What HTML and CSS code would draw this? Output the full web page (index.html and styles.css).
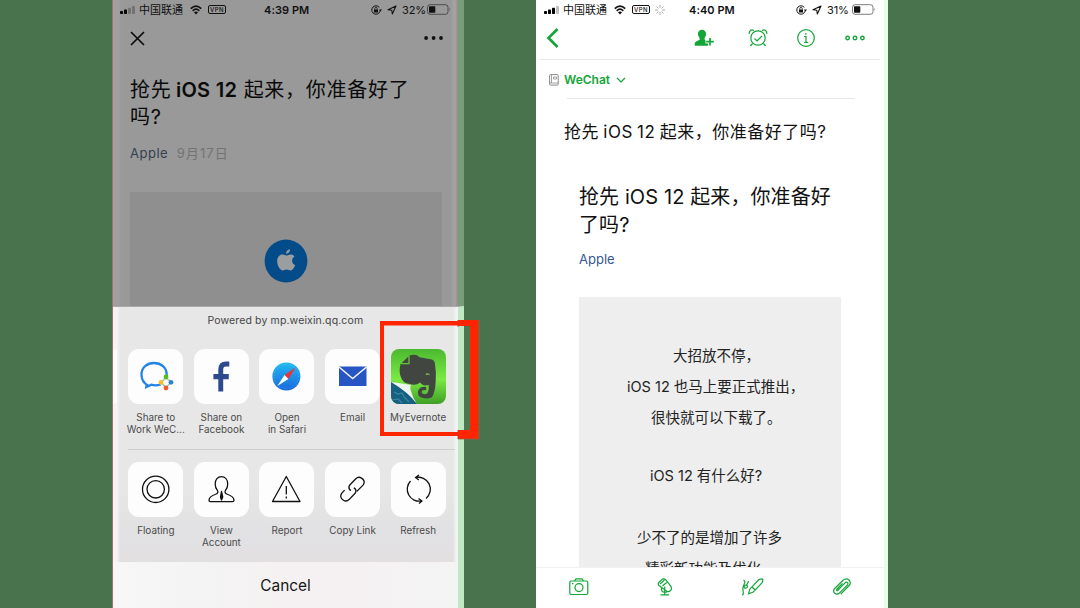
FILE: index.html
```html
<!DOCTYPE html>
<html lang="zh-CN">
<head>
<meta charset="utf-8">
<title>iOS 12</title>
<link rel="stylesheet" href="styles.css">
</head>
<body>
<svg class="defs" width="0" height="0">
  <symbol id="wifi" viewBox="0 0 12 10"><path d="M.8 3.7Q6-1.3 11.2 3.7M2.7 5.8Q6 2.6 9.3 5.8" fill="none" stroke="currentColor" stroke-width="1.7"/><path d="M6 9.5 3.9 7.3Q6 5.7 8.1 7.3Z" fill="currentColor"/></symbol>
  <symbol id="lock" viewBox="0 0 11 10"><circle cx="5" cy="5" r="4.2" fill="none" stroke="currentColor" stroke-width="1" stroke-dasharray="23 3"/><rect x="3" y="4.5" width="4" height="3" fill="currentColor"/><path d="M3.8 4.8V3.6a1.2 1.2 0 0 1 2.4 0v1" fill="none" stroke="currentColor" stroke-width=".8"/><path d="M8 4.4h3L9.5 6.4Z" fill="currentColor"/></symbol>
  <symbol id="nav" viewBox="0 0 10 10"><path d="M9 1 1 4.8l3.8.5.5 3.7Z" fill="none" stroke="currentColor" stroke-width="1.1" stroke-linejoin="round"/></symbol>
  <symbol id="battery" viewBox="0 0 24 11"><rect x=".5" y=".7" width="20.5" height="9.6" rx="2.6" fill="none" stroke="currentColor" stroke-opacity=".55"/><rect x="2" y="2.2" width="6.3" height="6.6" rx=".8" fill="currentColor"/><path d="M22.2 3.8q1.3 1.6 0 3.3Z" fill="currentColor" opacity=".6"/></symbol>
</svg>

<main class="stage">
  <section class="phone share">
    <header class="status">
      <svg class="signal" viewBox="0 0 15 8"><rect y="5" width="3" height="3" rx=".7"/><rect x="4" y="3.6" width="3" height="4.4" rx=".7"/><rect x="8" y="1.8" width="3" height="6.2" rx=".7" opacity=".25"/><rect x="12" width="3" height="8" rx=".7" opacity=".25"/></svg>
      <span class="carrier">中国联通</span>
      <svg class="wifi"><use href="#wifi"/></svg>
      <span class="vpn">VPN</span>
      <span class="clock">4:39 PM</span>
      <svg class="lock"><use href="#lock"/></svg>
      <svg class="nav"><use href="#nav"/></svg>
      <span class="percent">32%</span>
      <svg class="battery"><use href="#battery"/></svg>
    </header>
    <div class="toolbar">
      <svg width="15" height="15" viewBox="0 0 15 15"><path d="m1 1 13 13M14 1 1 14" stroke="#080808" stroke-width="1.6"/></svg>
      <svg width="20" height="4" viewBox="0 0 20 4"><g fill="#111"><circle cx="2.1" cy="2" r="1.9"/><circle cx="9.6" cy="2" r="1.9"/><circle cx="17" cy="2" r="1.9"/></g></svg>
    </div>
    <article class="article">
      <h1>抢先 <b>iOS 12</b> 起来，你准备好了<br>吗?</h1>
      <p class="byline"><span>Apple</span><time>9月17日</time></p>
      <div class="hero">
        <svg width="44" height="44" viewBox="0 0 44 44"><circle cx="22" cy="22" r="21.4" fill="#034b89"/><g fill="#9b9d9f"><path d="M22.2 16.6c1.4 0 2.5-1.1 4.500-1.100 1.700 0 3 .8 3.800 1.900-3.600 2-3 7.200.7 8.600-.9 2.600-2.700 5.400-4.700 5.400-1.500 0-2.100-.8-3.900-.8s-2.400.8-3.900.8c-2.500 0-5.500-4.900-5.500-9.200 0-4.200 2.500-6.600 5.300-6.600 1.700 0 2.900 1 3.700 1Z"/><path d="M22 14.700c0-2.300 1.700-4.200 4-4.500.2 2.500-1.900 4.400-4 4.500Z"/></g></svg>
      </div>
    </article>

    <div class="sheet">
      <p class="powered">Powered by mp.weixin.qq.com</p>
      <div class="apps">
        <div class="item"><div class="tile"><svg viewBox="0 0 55 55"><path d="M20 36.500Q13.500 33 13.500 25.500C13.500 18.500 19 14 26 14s12.700 4.500 12.700 11.600c0 1-.2 2-.5 2.700M18.800 35 18.300 38l5-2.300c3 1 6 .9 9.500-.2" fill="none" stroke="#2384e8" stroke-width="2.300"/><path d="m38 28.500 5 4.700-5 5.300-5-5.100Z" fill="none" stroke="#9fc6b0" stroke-width="1.500"/><circle cx="38" cy="28" r="2.400" fill="#54bd20"/><circle cx="43" cy="33.300" r="2.400" fill="#2b83d4"/><circle cx="38" cy="39" r="2.400" fill="#ef5932"/><circle cx="33" cy="33.500" r="2.400" fill="#f7bd2e"/></svg></div><p>Share to<br>Work WeC...</p></div>
        <div class="item"><div class="tile"><svg viewBox="0 0 55 55"><path d="M24.300 42.500V30.300h-4.900v-5.200h4.900V20.500q0-8 7.700-8h3.300v5H32q-2.800 0-2.800 3v4.600h5.600v5.200h-5.600v12.200Z" fill="#2e4a8d"/></svg></div><p>Share on<br>Facebook</p></div>
        <div class="item"><div class="tile"><svg viewBox="0 0 55 55"><defs><linearGradient id="sky" x2="0" y2="1"><stop stop-color="#20b9f4"/><stop offset="1" stop-color="#1968dc"/></linearGradient></defs><circle cx="27.400" cy="27.500" r="14" fill="url(#sky)"/><circle cx="27.400" cy="27.500" r="12.200" fill="none" stroke="#94ddfb" stroke-opacity=".45" stroke-width="1.200" stroke-dasharray=".6 2"/><path d="m36.500 18.500-11 7.500 3.900 4Z" fill="#ee3234"/><path d="m18.300 37 7.200-11 3.900 4Z" fill="#fff"/></svg></div><p>Open<br>in Safari</p></div>
        <div class="item"><div class="tile"><svg viewBox="0 0 55 55"><path d="M14 17.500h27.500V37H14Z" fill="#2855c4"/><path d="m14 18 13.700 11.500L41.500 18" fill="none" stroke="#f3f6ff" stroke-width="1.500"/></svg></div><p>Email</p></div>
        <div class="item"><div class="tile evernote"><svg viewBox="0 0 55 55"><defs><linearGradient id="leaf" x2="0" y2="1"><stop stop-color="#4bb92f"/><stop offset=".55" stop-color="#7bea44"/><stop offset="1" stop-color="#3f9f27"/></linearGradient></defs><rect width="55" height="55" fill="url(#leaf)"/><path d="M9.500 15 18.500 6.500q7-2 10 1.800l12.500 2.200q2.300.7 2.800 3.200 1.700 9 .9 18.300-.5 12-4 16.500-8 2.500-13-1.500-2.500-5.500 2-8.500 3-1.300 5.500-.5v3.300q-4.500-1-4.500 2 .5 2.500 4.500 1.800 3-1 2.500-9-6 1.500-8.500-2.500-4.500 3.500-10.500 1.500-7.500-1-9-7.500-2-5-.2-12.600Z" fill="#424640"/><path d="M10 14.700h8V7" fill="none" stroke="#65c63b" stroke-width="1.300"/><path d="M34.500 26q1-3.500 5 0-2.500-1-5 0Z" fill="#82e257"/><path d="M0 33q9 2 13 5.500 7 5.500 13 16.500H0Z" fill="#17607f"/><path d="M0 33q8 1 20 3-1.500 2-.3 5.500Q22 49 26 55 17 43 0 33Z" fill="#eff4f1"/><path d="m3 43 4 2 4-1 2 4 5 5M1 51l6-1 4 4" stroke="#3688a6" stroke-width="1.200" fill="none"/></svg></div><p>MyEvernote</p></div>
      </div>
      <div class="apps actions">
        <div class="item"><div class="tile"><svg class="line" viewBox="0 0 55 55"><circle cx="27.700" cy="27.300" r="13.200"/><circle cx="27.700" cy="27.300" r="8.700"/></svg></div><p>Floating</p></div>
        <div class="item"><div class="tile"><svg class="line" viewBox="0 0 55 55"><path d="M23.500 28.500c-1.500-1.500-2.300-3.400-2.300-6.500 0-4.500 2.500-7.300 6.200-7.300s6.300 2.800 6.300 7.300c0 3.100-.8 5-2.300 6.500-.8 1.200-.3 3 1.300 3.500 4 1.300 7.300 2.800 7.300 6.300 0 1-.5 1.400-1.400 1.400H16.300c-.9 0-1.300-.4-1.300-1.400 0-3.500 3.300-5 7.200-6.300 1.600-.5 2.100-2.300 1.300-3.500Z"/><path d="m27.500 29.500-1 5.500 1 3 1.200-3Z" fill="#111"/></svg></div><p>View<br>Account</p></div>
        <div class="item"><div class="tile"><svg class="line" viewBox="0 0 55 55"><path d="M27.300 14.500 41 39.500H13.500ZM27.300 24v8.500M27.300 34.500v2"/></svg></div><p>Report</p></div>
        <div class="item"><div class="tile"><svg class="line" viewBox="0 0 55 55"><path d="M26 28.500q-2.500-1.200-2-4 .3-1 1.500-2.200l5.300-5.600q2.700-2.500 5.700-.6 4.300 2.700 1.800 6.800l-6.500 6.500"/><path d="M28.800 25.800q2.600 1.200 2.100 4-.3 1-1.500 2.200l-5.300 5.600q-2.700 2.500-5.700.6-4.300-2.700-1.800-6.800l3-3.300"/></svg></div><p>Copy Link</p></div>
        <div class="item"><div class="tile"><svg class="line" viewBox="0 0 55 55"><path d="M19.500 19A12 12 0 0 0 30.500 39M24.500 15.600A12 12 0 0 1 35 36.500M28 13l-3.500 2.600 3.300 2.500M27.500 36.500l3.500 2.600-3 2.500"/></svg></div><p>Refresh</p></div>
      </div>
      <button class="cancel">Cancel</button>
    </div>
    <svg class="highlight" width="102" height="122" viewBox="0 0 102 122"><path d="M78 2V9M78 112v9" stroke="#617565"/><path d="M84 8h6v104h-6Z" fill="#4d7851"/><path d="M0 3h78V2h20.500v119H78v-3H0Zm4 4.500V114h74v-2h12V8H78v-.5Z" fill="#ff2500" fill-rule="evenodd"/><path d="M99 2v119H78" fill="none" stroke="#9b5d45" stroke-width=".8"/></svg>
  </section>

  <section class="phone note">
    <header class="status">
      <svg class="signal" viewBox="0 0 15 8"><rect y="5" width="3" height="3" rx=".7"/><rect x="4" y="3.600" width="3" height="4.400" rx=".7"/><rect x="8" y="1.800" width="3" height="6.200" rx=".7"/><rect x="12" width="3" height="8" rx=".7" opacity=".25"/></svg>
      <span class="carrier">中国联通</span>
      <svg class="wifi"><use href="#wifi"/></svg>
      <span class="vpn">VPN</span>
      <svg class="spinner" viewBox="0 0 10 10"><path d="M5 0v3M5 7v3M0 5h3M7 5h3M1.500 1.500l2 2M6.500 6.500l2 2M8.500 1.500l-2 2M3.500 6.500l-2 2" stroke="#999" stroke-width=".8"/></svg>
      <span class="clock">4:40 PM</span>
      <svg class="lock"><use href="#lock"/></svg>
      <svg class="nav"><use href="#nav"/></svg>
      <span class="percent">31%</span>
      <svg class="battery"><use href="#battery"/></svg>
    </header>
    <nav class="note-bar">
      <svg class="back" width="13" height="20" viewBox="0 0 13 20"><path d="M11.500 1 2.500 10l9 9" stroke-width="2.600"/></svg>
      <svg class="person" width="20" height="18" viewBox="0 0 20 18"><path d="M8 .8c2.400 0 4.100 1.600 4.100 4.200 0 2.400-1.600 3.200-1.600 5 0 1.400 3.600 1.500 3.600 3.200v3.500H.8c-.3-3.500.7-4.200 3-5 1.500-.6 1.900-.9 1.900-1.700C5.700 8.200 3.900 7.400 3.900 5 3.900 2.400 5.600.8 8 .8Z" fill="#13a538" stroke="none"/><path d="M16 8v9M11.500 12.500h8" stroke="#fff" stroke-width="4"/><path d="M16 9v7.500M12.200 12.700h7.600" stroke-width="1.700"/></svg>
      <svg class="alarm" width="20" height="18" viewBox="0 0 20 18"><circle cx="10" cy="9" r="7.200"/><path d="M6.500 9.500 9 12l5-5M1.300 4.800q-.5-3 2.700-4l2 .8M18.700 4.800q.5-3-2.700-4l-2 .8M4.600 14.500 2.400 17M15.400 14.500l2.200 2.500"/></svg>
      <svg class="info" width="18" height="18" viewBox="0 0 18 18"><circle cx="9" cy="9" r="8.300"/><path d="M7 7.500h2v6M7 13.500h4.200M8.800 4v1.700"/></svg>
      <svg class="more" width="20" height="6" viewBox="0 0 20 6"><g stroke-width="1.400"><circle cx="2.600" cy="3" r="1.750"/><circle cx="10" cy="3" r="1.750"/><circle cx="17.400" cy="3" r="1.750"/></g></svg>
    </nav>
    <div class="notebook">
      <svg width="10" height="12" viewBox="0 0 10 12"><rect x=".6" y=".6" width="8.600" height="10.500" rx="1" stroke="#8b8b8b"/><path d="M2.500.6V9M.6 9h8.600M4.500 3h3v2h-3Z" stroke="#8b8b8b" stroke-width=".8"/></svg>
      <b>WeChat</b>
      <svg class="caret" width="10" height="6" viewBox="0 0 10 6"><path d="m1 1 4 4 4-4"/></svg>
    </div>
    <h2 class="note-title">抢先 iOS 12 起来，你准备好了吗?</h2>
    <div class="clip">
      <h3>抢先 iOS 12 起来，你准备好<br>了吗?</h3>
      <a>Apple</a>
      <div class="body-text">
        <p class="l1">大招放不停，</p>
        <p class="l2">iOS 12 也马上要正式推出，</p>
        <p class="l3">很快就可以下载了。</p>
        <p class="l4">iOS 12 有什么好?</p>
        <p class="l5">少不了的是增加了许多</p>
        <p class="l6">精彩新功能及优化。</p>
      </div>
    </div>
    <footer class="tools">
      <svg width="20" height="18" viewBox="0 0 20 18"><rect x=".8" y="3" width="18" height="13.500" rx="1.500"/><path d="M5.500 3 7 .8h6L14.500 3M3 5.700h1.500"/><circle cx="10" cy="9.600" r="4"/></svg>
      <svg width="16" height="18" viewBox="0 0 16 18"><path d="m1.500 4.700 4-3.600q1.700-.8 3.300.8l5 6.300q1.500 2.700-.4 4.600-2.200 1.700-4.400-.2L1.700 7.300q-.8-1.300-.2-2.600ZM3 6l4.500-4M5.300 8l4.500-3.500M4.500 9v2.500q.3 2.700 3.200 2.800 1.700 0 2.600-1M7.700 8.500v8M3.500 16.800h8.600"/></svg>
      <svg width="23" height="18" viewBox="0 0 23 18"><path d="m7.500 15.800 1.300-4.600L17.500 2q1.200-1.200 2.700-.8h1.500v1.900q0 1-1 2L12.300 14ZM11 9l3.200 3M2.500 2q2.500 1.500.5 4.500-2 3.500-.8 7 .6 3-1 3.500M3 9q.5-2.500 3-1.700 1.200 1.700-.8 2.700Q3.500 10.500 3 9M5.700 7l2-4"/></svg>
      <svg width="20" height="18" viewBox="0 0 20 18"><path d="m5 13 8.300-8.400q1.300-1 2.200 0t0 2.300l-8.300 8.400q-2.200 1.800-4.400 0-2.200-2.200-.3-4.600L11 2.300q3-2.600 5.700-.5 2.900 2.800.5 5.700l-8.500 8.700M5 13q-.8-1 0-2l5.500-5.700"/></svg>
    </footer>
  </section>
</main>
</body>
</html>
```
FILE: styles.css
```css
* { box-sizing: border-box; }
body, h1, h2, h3, p { margin: 0; font-weight: 400; }
body {
  width: 1080px;
  height: 608px;
  overflow: hidden;
  background: #49734c;
  font-family: Inter, "Noto Sans CJK SC", sans-serif;
  color: #111;
  white-space: nowrap;
}
.defs { position: absolute; }
svg { display: block; flex: none; }
.stage { display: flex; height: 608px; padding-left: 112px; gap: 72px; }
.phone { display: flex; flex-direction: column; height: 608px; }

.status {
  display: flex;
  align-items: center;
  flex: none;
  height: 19px;
  font-size: 11px;
}
.signal { width: 15px; height: 8px; }
.carrier { width: 44px; margin-left: 4px; font-size: 11px; line-height: 18px; }
.wifi { width: 12px; height: 10px; margin-left: 7px; }
.vpn {
  width: 18px;
  height: 9px;
  margin-left: 6px;
  border: 1px solid currentColor;
  border-radius: 2px;
  font-size: 6px;
  font-weight: 500;
  line-height: 7px;
  letter-spacing: .4px;
  text-align: center;
}
.spinner { width: 10px; height: 10px; margin-left: 5px; }
.clock { width: 46px; margin-left: 38px; font-weight: 600; letter-spacing: .05px; }
.lock { width: 11px; height: 10px; margin-left: 61px; }
.nav { width: 10px; height: 10px; margin-left: 5px; }
.percent { width: 24px; margin-left: 5px; letter-spacing: -.15px; }
.battery { width: 24px; height: 11px; margin-left: 1px; }

.share {
  position: relative;
  width: 352px;
  border-left: 1px solid #b06d6b;
  border-right: 6px solid #789e79;
  background: linear-gradient(90deg, #a0a0a0 0 6px, #999 8px 338px, #a2a2a2 340px 343px, #998f8b 344px);
}
.share .status { padding-left: 7px; }
.toolbar {
  display: flex;
  align-items: center;
  justify-content: space-between;
  height: 38px;
  padding: 1px 14px 0 17px;
}
.article { height: 250px; padding: 20.5px 16px 0 17px; }
.article h1 { font-size: 20px; line-height: 27.5px; letter-spacing: .75px; color: #0a0a0a; }
.article b { margin: 0 0 0 -2px; font-weight: 600; letter-spacing: .3px; }
.byline { display: flex; gap: 8.5px; margin-top: 11.5px; font-size: 13px; line-height: 20px; letter-spacing: .5px; }
.byline span { color: #343f52; }
.byline time { color: #737373; letter-spacing: 1.1px; }
.hero { display: flex; justify-content: center; height: 114px; margin-top: 29px; padding-top: 47px; background: #8f8f8f; }

.sheet {
  position: relative;
  flex: 1;
  width: 351px;
  border-right: 6px solid #c1e8c5;
  border-top: 1px solid #a9a9a9;
  background: linear-gradient(90deg, #f4f4f4 0 4px, transparent 7px 340px, #f3f3f3 343px), linear-gradient(#e7e7e7 60%, #e1e1e3 75%, #e5dcdd);
}
.sheet::before {
  content: "";
  position: absolute;
  left: 0;
  top: 42px;
  width: 4px;
  height: 55px;
  border-radius: 0 4px 4px 0;
  background: #fff;
}
.powered { height: 42px; line-height: 27px; padding-left: 94.5px; font-size: 10.5px; letter-spacing: .13px; color: #444; }
.apps { display: grid; grid-template-columns: repeat(5, 65.6px); height: 100px; padding-left: 10px; }
.actions {
  height: 113px;
  width: 327px;
  margin-left: 15px;
  padding-left: 0;
  padding-top: 12px;
  border-top: 1px solid #cfcfcf;
}
.actions .item { margin-left: -5px; margin-right: 5px; }
.item { display: flex; flex-direction: column; align-items: center; }
.tile { width: 55px; height: 55px; border-radius: 11px; background: #fdfdfd; overflow: hidden; flex: none; }
.evernote { border-radius: 8px; }
.tile svg { width: 55px; height: 55px; }
.line { fill: none; stroke: #111; stroke-width: 1.3; stroke-linejoin: round; }
.item p { margin-top: 6.5px; font-size: 9.9px; line-height: 12px; color: #4b4b4b; text-align: center; }
.cancel {
  display: block;
  width: 345px;
  height: 46px;
  padding: 0;
  border: 0;
  background: linear-gradient(90deg, #f7f7f7, #f4f3f3 30%, #f5f0f1 60%, #f4f4f4);
  font: 400 15.4px/47px Inter, sans-serif;
  color: #161616;
}
.highlight { position: absolute; left: 267px; top: 318px; }

.note { width: 352px; border-right: 4px solid #e4ffe5; background: #fff; }
.note .status { padding-left: 8px; }
.note .clock { margin-left: 24px; }
.note-bar {
  display: flex;
  align-items: center;
  height: 41px;
  flex: none;
  margin: 0 4px;
  padding: 0 0 3px 6px;
  border-bottom: 1px solid #e8e8ea;
}
.note-bar svg, .caret, .tools svg { fill: none; stroke: #13a538; stroke-width: 1.2; }
.person { margin-left: 135px; }
.alarm { margin-left: 34px; }
.info { margin-left: 29px; }
.more { margin-left: 30px; }
.notebook {
  display: flex;
  align-items: center;
  flex: none;
  height: 39px;
  padding-left: 13px;
  fill: none;
  background: linear-gradient(#e8e8e8, #e8e8e8) 31px 100% / 288px 1px no-repeat;
}
.notebook b { width: 48px; margin-left: 5px; font-size: 12px; font-weight: 600; letter-spacing: 0; color: #13a538; }
.caret { margin-left: 4px; }
.note-title { padding: 18px 0 0 28px; font-size: 17px; line-height: 30px; letter-spacing: .5px; word-spacing: -1px; }
.clip { flex: 1; min-height: 0; overflow: hidden; padding: 37px 43px 0; }
.clip h3 { font-size: 20px; line-height: 27.5px; letter-spacing: .1px; }
.clip a { display: block; margin-top: 10px; font-size: 13px; line-height: 20px; color: #38578e; }
.body-text { height: 300px; margin-top: 28px; padding-top: 43px; background: #eee; font-size: 14.5px; line-height: 31px; color: #222; }
.l1 { padding-left: 94px; }
.l2 { padding-left: 48px; }
.l3 { padding-left: 72px; }
.l4 { margin-top: 27px; padding-left: 71px; }
.l5 { margin-top: 30.5px; padding-left: 58px; }
.l6 { padding-left: 66px; }
.tools {
  display: flex;
  flex: none;
  height: 41px;
  justify-content: space-between;
  align-items: center;
  padding: 0 32px 2px 33px;
  border-top: 1px solid #f1f1f1;
}
```
